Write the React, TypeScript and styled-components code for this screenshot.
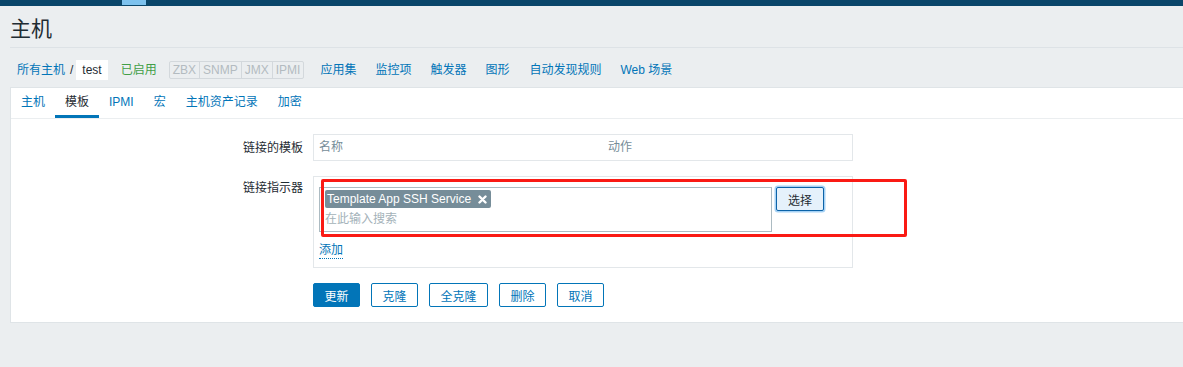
import styled, { createGlobalStyle } from 'styled-components';

const GlobalStyle = createGlobalStyle`
  body {
    margin: 0;
    background: #ebeef0;
    font-family: 'Liberation Sans', 'Noto Sans CJK SC', sans-serif;
    font-size: 12px;
    color: #1f2c33;
  }
`;

const Page = styled.div`
  position: relative;
  min-height: 367px;
  background: #ebeef0;
`;

const TopBar = styled.div`
  height: 6px;
  background: #0a466a;
  padding-left: 122px;
  > span {
    display: block;
    width: 24px;
    height: 5px;
    background: #7dc2ee;
  }
`;

const Header = styled.header`
  margin-left: 10px;
  padding: 8px 0 3px;
  border-bottom: 1px solid #dde2e6;
  h1 {
    margin: 0;
    font-size: 21px;
    font-weight: 400;
    line-height: 30px;
    color: #1f2c33;
  }
`;

const HostNav = styled.nav`
  display: flex;
  align-items: center;
  padding: 12px 0 7px 17px;
  height: 20px;
  line-height: 20px;
`;

const NavLink = styled.a<{ $gap?: number }>`
  color: #0275b8;
  text-decoration: none;
  margin-left: ${(p) => p.$gap ?? 0}px;
  white-space: nowrap;
`;

const Sep = styled.span`
  color: #1f2c33;
  margin: 0 3px 0 5px;
`;

const Current = styled.span`
  background: #fff;
  padding: 0 6px;
  color: #1f2c33;
`;

const Status = styled.span`
  color: #429e47;
  margin-left: 13px;
`;

const Avail = styled.div`
  display: flex;
  margin-left: 12px;
  border: 1px solid #d3d8dc;
  border-radius: 2px;
  height: 16px;
  line-height: 16px;
  span {
    padding: 0 3px;
    color: #b3bbc0;
    border-left: 1px solid #d3d8dc;
  }
  span:first-child {
    border-left: none;
  }
`;

const Panel = styled.section`
  margin-left: 10px;
  background: #fff;
  border: 1px solid #dfe4e7;
  border-right: none;
  padding-bottom: 15px;
`;

const Tabs = styled.ul`
  display: flex;
  margin: 0;
  padding: 0;
  list-style: none;
  border-bottom: 1px solid #ebeef0;
`;

const Tab = styled.li<{ $active?: boolean }>`
  padding: 0 10px;
  height: 30px;
  line-height: 29px;
  box-sizing: border-box;
  color: ${(p) => (p.$active ? '#1f2c33' : '#0275b8')};
  border-bottom: 3px solid ${(p) => (p.$active ? '#0275b8' : 'transparent')};
`;

const Form = styled.div`
  display: grid;
  grid-template-columns: 292px 540px;
  column-gap: 10px;
  row-gap: 15px;
  padding-top: 15px;
`;

const Label = styled.label<{ $top?: boolean }>`
  text-align: right;
  line-height: 18px;
  align-self: ${(p) => (p.$top ? 'start' : 'center')};
  padding-top: ${(p) => (p.$top ? 3 : 0)}px;
`;

const TableBox = styled.div`
  display: grid;
  grid-template-columns: 289px 1fr;
  border: 1px solid #e3e7ea;
  height: 25px;
  line-height: 25px;
  color: #768d99;
  span {
    padding-left: 5px;
  }
`;

const LinkBox = styled.div`
  border: 1px solid #e3e7ea;
  padding: 10px 5px 8px;
`;

const SelectRow = styled.div`
  display: flex;
  align-items: flex-start;
  gap: 4px;
`;

const MultiSelect = styled.div`
  width: 446px;
  height: 41px;
  border: 1px solid #acbbc2;
  padding: 2px 0 0 5px;
`;

const TagItem = styled.span`
  display: inline-flex;
  align-items: center;
  height: 18px;
  background: #768d99;
  color: #fff;
  border-radius: 2px;
  padding: 0 4px 0 2px;
  gap: 7px;
  line-height: 18px;
`;

const SearchInput = styled.div`
  margin-top: 2px;
  color: #a4b2b9;
  line-height: 18px;
`;

const SelectBtn = styled.button`
  width: 48px;
  height: 24px;
  font: inherit;
  color: #1f2c33;
  background: #e5f1fb;
  border: 1px solid #0c63a8;
  border-radius: 2px;
  box-shadow: 0 0 0 1.5px #a6d2f5;
  padding: 0;
`;

const AddLink = styled.a`
  display: inline-block;
  margin-top: 10px;
  color: #0275b8;
  text-decoration: none;
  border-bottom: 1px dotted #0275b8;
  line-height: 16px;
`;

const Buttons = styled.div`
  grid-column: 2;
  display: flex;
  gap: 11px;
`;

const Btn = styled.button<{ $primary?: boolean }>`
  height: 24px;
  padding: 0 10.5px;
  font: inherit;
  border-radius: 2px;
  border: 1px solid #0275b8;
  background: ${(p) => (p.$primary ? '#0275b8' : '#fff')};
  color: ${(p) => (p.$primary ? '#fff' : '#0275b8')};
`;

const Annotation = styled.div`
  position: absolute;
  left: 321px;
  top: 179px;
  width: 580px;
  height: 52px;
  border: 3px solid #fa1a14;
  border-radius: 2px;
  pointer-events: none;
`;

function CloseIcon() {
  return (
    <svg width="9" height="9" viewBox="0 0 9 9">
      <path d="M1.5 1.5l6 6M7.5 1.5l-6 6" stroke="#fff" strokeWidth="2.4" strokeLinecap="round" />
    </svg>
  );
}

export default function App() {
  return (
    <Page>
      <GlobalStyle />
      <TopBar>
        <span />
      </TopBar>
      <Header>
        <h1>主机</h1>
      </Header>
      <HostNav>
        <NavLink>所有主机</NavLink>
        <Sep>/</Sep>
        <Current>test</Current>
        <Status>已启用</Status>
        <Avail>
          <span>ZBX</span>
          <span>SNMP</span>
          <span>JMX</span>
          <span>IPMI</span>
        </Avail>
        <NavLink $gap={16}>应用集</NavLink>
        <NavLink $gap={19}>监控项</NavLink>
        <NavLink $gap={19}>触发器</NavLink>
        <NavLink $gap={19}>图形</NavLink>
        <NavLink $gap={20}>自动发现规则</NavLink>
        <NavLink $gap={19}>Web 场景</NavLink>
      </HostNav>
      <Panel>
        <Tabs>
          <Tab>主机</Tab>
          <Tab $active>模板</Tab>
          <Tab>IPMI</Tab>
          <Tab>宏</Tab>
          <Tab>主机资产记录</Tab>
          <Tab>加密</Tab>
        </Tabs>
        <Form>
          <Label>链接的模板</Label>
          <TableBox>
            <span>名称</span>
            <span>动作</span>
          </TableBox>
          <Label $top>链接指示器</Label>
          <LinkBox>
            <SelectRow>
              <MultiSelect>
                <TagItem>
                  Template App SSH Service
                  <CloseIcon />
                </TagItem>
                <SearchInput>在此输入搜索</SearchInput>
              </MultiSelect>
              <SelectBtn>选择</SelectBtn>
            </SelectRow>
            <AddLink>添加</AddLink>
          </LinkBox>
          <Buttons>
            <Btn $primary>更新</Btn>
            <Btn>克隆</Btn>
            <Btn>全克隆</Btn>
            <Btn>删除</Btn>
            <Btn>取消</Btn>
          </Buttons>
        </Form>
      </Panel>
      <Annotation />
    </Page>
  );
}
